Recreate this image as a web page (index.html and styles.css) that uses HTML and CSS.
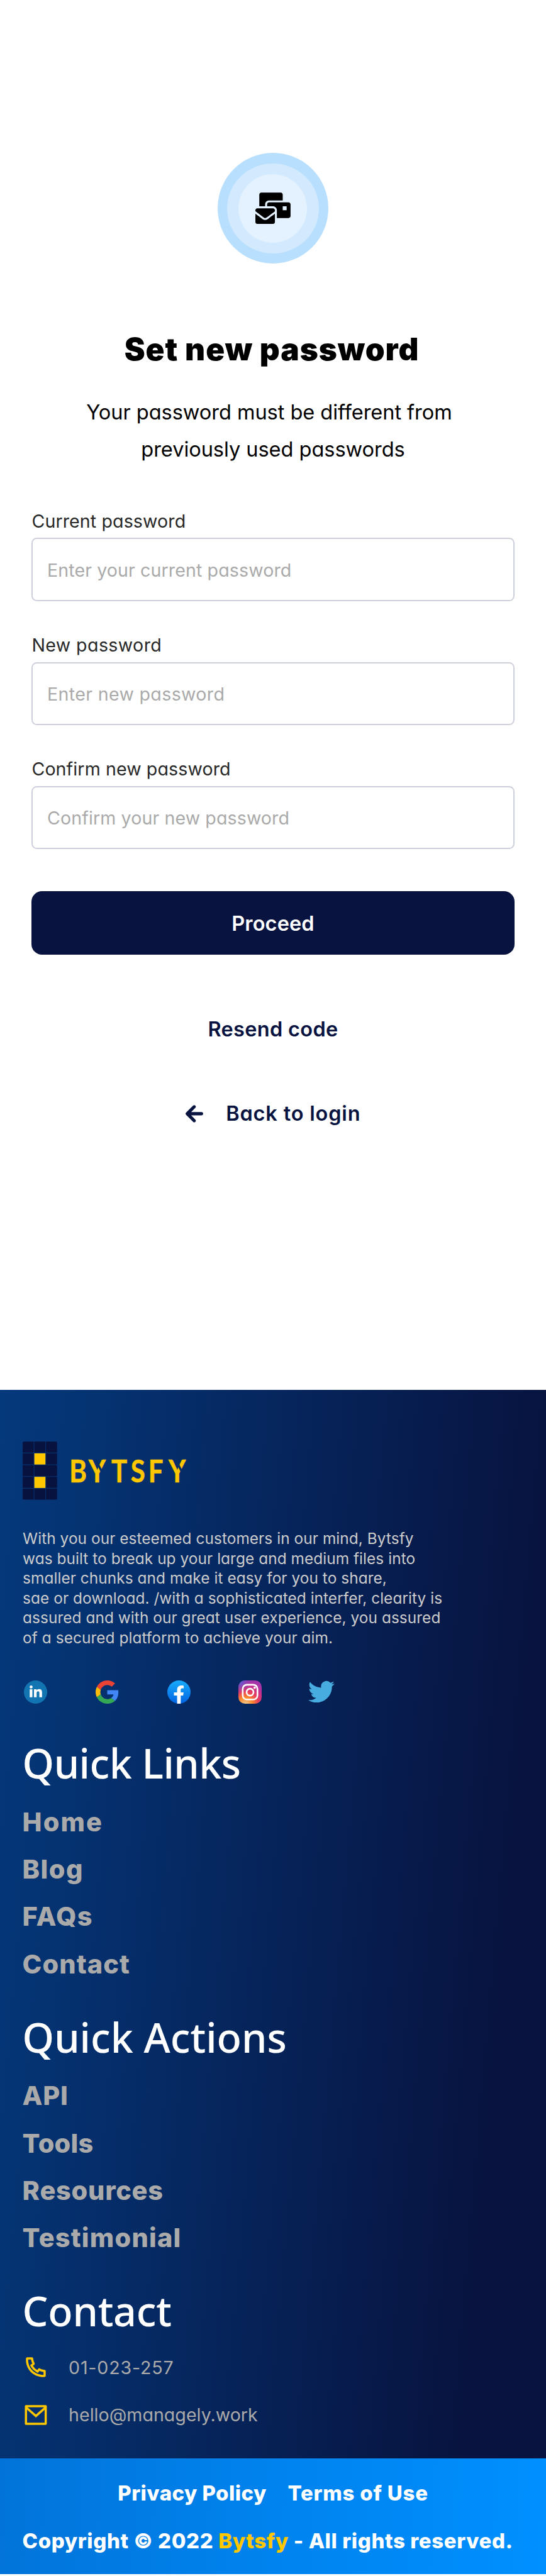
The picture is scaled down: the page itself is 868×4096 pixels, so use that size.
FILE: index.html
```html
<!DOCTYPE html>
<html lang="en">
<head>
<meta charset="utf-8">
<title>Set new password - Bytsfy</title>
<link rel="stylesheet" href="styles.css">
</head>
<body>
<div class="page">
  <main class="main">
    <div class="badge"><div class="badge-mid"><div class="badge-core">
      <svg class="badge-icon" viewBox="0 0 576 512"><path d="M160 448c-25.6 0-51.2-22.4-64-32-64-44.8-83.2-60.8-96-70.4V480c0 17.67 14.33 32 32 32h256c17.67 0 32-14.33 32-32V345.6c-12.8 9.6-32 25.6-96 70.4-12.8 9.6-38.4 32-64 32zm128-192H32c-17.67 0-32 14.33-32 32v16c25.6 19.2 22.4 19.2 115.2 86.4 9.6 6.4 28.8 25.6 44.8 25.6s35.2-19.2 44.8-22.4c92.8-67.2 89.6-67.2 115.2-86.4V288c0-17.67-14.33-32-32-32zm256-96H224c-17.67 0-32 14.33-32 32v32h96c33.21 0 60.59 25.42 63.71 57.82l.29-.22V416h192c17.67 0 32-14.33 32-32V192c0-17.67-14.33-32-32-32zm-32 128h-64v-64h64v64zm-352-96c0-35.29 28.71-64 64-64h224V32c0-17.67-14.33-32-32-32H96C78.33 0 64 14.33 64 32v192h96v-32z"/></svg>
    </div></div></div>
    <h1 class="title">Set new password</h1>
    <p class="subtitle"><span class="subtitle-first">Your password must be different from</span><br>previously used passwords</p>
    <form class="form">
      <div class="field current">
        <label class="label" for="current">Current password</label>
        <input class="input" id="current" type="text" placeholder="Enter your current password">
      </div>
      <div class="field new">
        <label class="label" for="new">New password</label>
        <input class="input" id="new" type="text" placeholder="Enter new password">
      </div>
      <div class="field confirm">
        <label class="label" for="confirm">Confirm new password</label>
        <input class="input" id="confirm" type="text" placeholder="Confirm your new password">
      </div>
      <button class="proceed" type="button">Proceed</button>
    </form>
    <a class="resend">Resend code</a>
    <a class="back">
      <svg class="back-icon" viewBox="0 0 40 40"><path d="M19.6 4 3.8 19.8l15.8 15.8M4.500 19.800h31.800" fill="none" stroke="#08133f" stroke-width="7.200" stroke-linecap="round" stroke-linejoin="round"/></svg>
      <span>Back to login</span>
    </a>
  </main>

  <footer class="footer">
    <svg class="logo" viewBox="0 0 380 133">
      <g fill="#08123f">
        <path d="M3 .2h22.2v25.2H0V3.2a3 3 0 0 1 3-3z"/>
        <rect x="26.6" y=".2" width="25.2" height="25.2"/>
        <path d="M53.1.2h22.2a3 3 0 0 1 3 3v22.2H53.1z"/>
        <rect x="0" y="27" width="25.2" height="25.2"/>
        <rect x="53.1" y="27" width="25.2" height="25.2"/>
        <rect x="0" y="53.8" width="25.2" height="25.2"/>
        <path d="M26.6 53.8h48.7a3 3 0 0 1 3 3V76a3 3 0 0 1-3 3H26.600z"/>
        <rect x="0" y="80.4" width="25.2" height="25.2"/>
        <rect x="53.1" y="80.4" width="25.2" height="25.2"/>
        <path d="M0 107.2h25.2v25.2H3a3 3 0 0 1-3-3z"/>
        <rect x="26.6" y="107.2" width="25.2" height="25.2"/>
        <path d="M53.1 107.2h25.2v22.2a3 3 0 0 1-3 3H53.1z"/>
      </g>
      <g fill="#ffc700">
        <rect x="26.6" y="27" width="25.2" height="25.4"/>
        <rect x="26.6" y="80.4" width="25.2" height="25.4"/>
      </g>
      <text class="logo-text" transform="scale(.86 1)" x="123.7 174.3 234.7 285.9 332.2 385.9" y="93.700">BYTSFY</text>
      <path d="M164.500 38l15 30M346.500 38l15 30" stroke="#062f69" stroke-width="5" fill="none"/>
    </svg>
    <p class="about">With you our esteemed customers in our mind, Bytsfy<br>was built to break up your large and medium files into<br>smaller chunks and make it easy for you to share,<br>sae or download. /with a sophisticated interfer, clearity is<br>assured and with our great user experience, you assured<br>of a secured platform to achieve your aim.</p>
    <div class="social">
      <svg class="social-icon" viewBox="0 0 53 53"><circle cx="26.5" cy="26.5" r="26.5" fill="#1275b1"/><g fill="#fff"><circle cx="16.4" cy="14.9" r="3.4"/><path d="M13.2 20.2h6.1v18h-6.1zM22.9 20.2h5.9v2.5c1-1.8 3-3 5.8-3 5 0 6.7 3 6.7 8v10.5h-6.1v-9.3c0-2.700-.6-4.100-2.800-4.100-2.400 0-3.400 1.600-3.400 4.200v9.200h-6.100z"/></g></svg>
      <svg class="social-icon" viewBox="0 0 48 48"><path fill="#ea4335" d="M24 9.500c3.540 0 6.710 1.220 9.210 3.600l6.850-6.850C35.900 2.380 30.470 0 24 0 14.620 0 6.510 5.380 2.560 13.220l7.980 6.190C12.430 13.720 17.740 9.500 24 9.500z"/><path fill="#4285f4" d="M46.980 24.550c0-1.570-.15-3.090-.38-4.550H24v9.020h12.940c-.58 2.960-2.260 5.480-4.780 7.180l7.730 6c4.510-4.180 7.090-10.360 7.090-17.650z"/><path fill="#fbbc05" d="M10.530 28.590c-.48-1.450-.76-2.990-.76-4.590s.27-3.140.76-4.590l-7.980-6.190C.92 16.460 0 20.120 0 24c0 3.880.92 7.540 2.560 10.780l7.970-6.190z"/><path fill="#34a853" d="M24 48c6.480 0 11.930-2.130 15.890-5.810l-7.730-6c-2.150 1.450-4.920 2.300-8.160 2.300-6.260 0-11.570-4.220-13.470-9.910l-7.980 6.190C6.510 42.620 14.620 48 24 48z"/></svg>
      <svg class="social-icon" viewBox="0 0 53 53"><defs><linearGradient id="fb" x1="0" y1="0" x2="0" y2="1"><stop offset="0" stop-color="#18acfe"/><stop offset="1" stop-color="#0163e0"/></linearGradient></defs><circle cx="26.500" cy="26.500" r="26.500" fill="url(#fb)"/><path fill="#fff" d="M22.300 52.700V34.300h-7.200v-7h7.200V22c0-7 3.700-10.400 10.200-10.400 2 0 3.500.2 4.800.4v6h-3.500c-2.800 0-3.300 1.500-3.300 3.800v5.500h6.600l-1.100 7h-5.500v18.400a26 26 0 0 1-8.200 0z"/></svg>
      <svg class="social-icon" viewBox="0 0 53 53"><defs><radialGradient id="ig" cx=".3" cy="1.05" r="1.05"><stop offset="0" stop-color="#e6d79a"/><stop offset=".12" stop-color="#f3b670"/><stop offset=".3" stop-color="#ff8a2c"/><stop offset=".55" stop-color="#e63e5c"/><stop offset=".8" stop-color="#c52f92"/><stop offset="1" stop-color="#a334ac"/></radialGradient><radialGradient id="igb" cx="0" cy="0" r=".6"><stop offset="0" stop-color="#3f6fe0"/><stop offset="1" stop-color="#7a3fc4" stop-opacity="0"/></radialGradient></defs><rect width="53" height="53" rx="15" fill="url(#ig)"/><rect width="53" height="53" rx="15" fill="url(#igb)"/><g fill="none" stroke="#fff" stroke-width="3.700"><rect x="9.800" y="9.800" width="33.600" height="33.600" rx="9.500"/><circle cx="26.500" cy="26.700" r="7.900"/></g><circle cx="37" cy="16.500" r="2.700" fill="#fff"/></svg>
      <svg class="social-icon twitter" viewBox="0 0 24 24"><path fill="#47acdf" d="M23.953 4.570a10 10 0 01-2.825.775 4.958 4.958 0 002.163-2.723c-.951.555-2.005.959-3.127 1.184a4.920 4.920 0 00-8.384 4.482C7.690 8.095 4.067 6.130 1.640 3.162a4.822 4.822 0 00-.666 2.475c0 1.710.870 3.213 2.188 4.096a4.904 4.904 0 01-2.228-.616v.060a4.923 4.923 0 003.946 4.827 4.996 4.996 0 01-2.212.085 4.936 4.936 0 004.604 3.417 9.867 9.867 0 01-6.102 2.105c-.390 0-.779-.023-1.170-.067a13.995 13.995 0 007.557 2.209c9.053 0 13.998-7.496 13.998-13.985 0-.210 0-.420-.015-.630A9.935 9.935 0 0024 4.590z"/></svg>
    </div>

    <h2 class="heading links-heading">Quick Links</h2>
    <nav class="links">
      <a class="link home">Home</a>
      <a class="link blog">Blog</a>
      <a class="link faqs">FAQs</a>
      <a class="link contact">Contact</a>
    </nav>
    <h2 class="heading actions-heading">Quick Actions</h2>
    <nav class="links">
      <a class="link api">API</a>
      <a class="link tools">Tools</a>
      <a class="link resources">Resources</a>
      <a class="link testimonial">Testimonial</a>
    </nav>
    <h2 class="heading contact-heading">Contact</h2>
    <div class="contacts">
      <div class="contact-row phone">
        <svg class="contact-icon" viewBox="0 0 24 24"><path d="M9.366 10.682a10.556 10.556 0 0 0 3.952 3.952l.884-1.238a1 1 0 0 1 1.294-.296 11.422 11.422 0 0 0 4.583 1.364 1 1 0 0 1 .921.997v4.462a1 1 0 0 1-.898.995c-.53.055-1.064.082-1.602.082C9.940 21 3 14.060 3 5.500c0-.538.027-1.072.082-1.602A1 1 0 0 1 4.077 3h4.462a1 1 0 0 1 .997.921A11.422 11.422 0 0 0 10.900 8.504a1 1 0 0 1-.296 1.294l-1.238.884zm-2.522-.657l1.900-1.357A13.410 13.410 0 0 1 7.647 5H5.010c-.006.166-.009.333-.009.500C5 12.956 11.044 19 18.500 19c.167 0 .334-.003.500-.010v-2.637a13.410 13.410 0 0 1-3.668-1.097l-1.357 1.900a12.442 12.442 0 0 1-1.588-.750l-.058-.033a12.556 12.556 0 0 1-4.702-4.702l-.033-.058a12.442 12.442 0 0 1-.750-1.588z"/></svg>
        <span>01-023-257</span>
      </div>
      <div class="contact-row email">
        <svg class="contact-icon" viewBox="0 0 24 24"><path d="M3 3h18a1 1 0 0 1 1 1v16a1 1 0 0 1-1 1H3a1 1 0 0 1-1-1V4a1 1 0 0 1 1-1zm17 4.238l-7.928 7.100L4 7.216V19h16V7.238zM4.511 5l7.550 6.662L19.502 5H4.511z"/></svg>
        <span>hello@managely.work</span>
      </div>
    </div>
  </footer>

  <div class="bottom">
    <div class="legal"><a class="privacy">Privacy Policy</a><a class="terms">Terms of Use</a></div>
    <p class="copyright">Copyright © 2022 <span class="brand">Bytsfy</span> - All rights reserved.</p>
  </div>
</div>
</body>
</html>
```
FILE: styles.css
```css
* { box-sizing: border-box; }
body {
  margin: 0;
  background: #fff;
  font-family: Inter, "Open Sans", sans-serif;
  font-feature-settings: "cv11";
}
h1, h2, p { margin: 0; }
svg { display: block; flex: none; }
.page { display: flex; flex-direction: column; width: 868px; height: 4096px; }

.main {
  flex: none;
  display: flex;
  flex-direction: column;
  align-items: center;
  height: 2209.8px;
  padding: 243.2px 50.4px 0;
}
.badge, .badge-mid, .badge-core { display: flex; align-items: center; justify-content: center; border-radius: 50%; flex: none; }
.badge { width: 176.2px; height: 176.2px; background: #b9dffe; }
.badge-mid { width: 146.8px; height: 142.9px; background: #d2e9fe; }
.badge-core { width: 109px; height: 109px; background: #e4f2ff; }
.badge-icon { width: 55.9px; height: 50.3px; }

.title {
  margin-top: 105.5px;
  margin-right: 4px;
  font-size: 49.5px;
  line-height: 60px;
  font-weight: 900;
  letter-spacing: .95px;
  color: #000;
  font-feature-settings: normal;
}
.subtitle { margin-top: 41.4px; font-size: 32.6px; line-height: 58.7px; letter-spacing: -.07px; text-align: center; white-space: nowrap; color: #000; }
.subtitle-first { padding-right: 12px; }

.form { width: 100%; margin-top: 66.9px; }
.field { display: flex; flex-direction: column; margin-bottom: 51.5px; }
.label { font-size: 28.6px; line-height: 36px; color: #282828; letter-spacing: .1px; }
.input {
  width: 100%;
  height: 100.7px;
  margin: 8.9px 0 0;
  padding: 1px 22.6px 0;
  border: 2px solid #cdd0db;
  border-radius: 8.4px;
  background: #fff;
  font: 28.6px Inter, sans-serif;
  font-feature-settings: "cv11";
  letter-spacing: .1px;
}
.input::placeholder { color: #aaa; opacity: 1; }
.new .label { letter-spacing: .39px; }
.new .input { letter-spacing: .34px; }
.proceed {
  display: block;
  width: 100%;
  height: 100.6px;
  margin-top: 67px;
  padding: 1px 0 0;
  border: 0;
  border-radius: 16.8px;
  background: #08133f;
  color: #fff;
  font: 600 32.5px Inter, sans-serif;
  letter-spacing: .12px;
}
.resend, .back { font-size: 32.5px; line-height: 40px; font-weight: 600; color: #08133f; }
.resend { margin-top: 99px; letter-spacing: .32px; }
.back { display: flex; align-items: center; gap: 36.700px; margin-top: 94px; letter-spacing: .82px; }
.back-icon { width: 28px; height: 28px; }

.footer {
  flex: none;
  height: 1699px;
  padding: 82.5px 36px 0 35.6px;
  background: linear-gradient(95deg, #04397c 0%, #08133f 87%);
}
.logo { width: 265.6px; height: 93px; }
.logo-text { font: 700 70px Lato, sans-serif; font-feature-settings: normal; fill: #ffc700; stroke: #ffc700; stroke-width: .8; }
.about { margin-top: 46px; padding-left: .5px; font-size: 24.4px; line-height: 31.45px; letter-spacing: .06px; color: #ccc; white-space: nowrap; }
.social { display: flex; align-items: center; gap: 76.7px; height: 37px; margin-top: 51.8px; padding-left: 2.6px; }
.social-icon { width: 37px; height: 37px; }
.twitter { width: 42px; height: 42px; margin-left: -2.9px; }

.heading { font: 500 64.5px/80px "Noto Sans", "Open Sans", sans-serif; font-feature-settings: normal; color: #fff; white-space: nowrap; }
.links-heading { margin-top: 54.3px; letter-spacing: -.5px; }
.actions-heading { margin-top: 37.4px; letter-spacing: 0; }
.contact-heading { margin-top: 37.2px; letter-spacing: -.25px; }
.links { display: flex; flex-direction: column; margin-top: 16.4px; }
.actions-heading + .links { margin-bottom: .5px; }
.link { font-size: 41.5px; line-height: 75.45px; font-weight: 800; color: #aaa; font-feature-settings: normal; letter-spacing: 1.21px; }
.home { letter-spacing: 2.09px; }
.blog, .faqs { letter-spacing: 1.42px; }
.contact { letter-spacing: 1.05px; }
.api, .resources { letter-spacing: .75px; }
.tools { letter-spacing: .2px; }

.contacts { margin-top: 12.2px; }
.contact-row { display: flex; align-items: center; gap: 31.5px; height: 75.5px; font-size: 28.6px; color: #aaa; }
.contact-icon { width: 41.93px; height: 41.93px; fill: #ffc700; }
.phone { letter-spacing: .83px; }
.email { letter-spacing: .02px; }

.bottom {
  flex: none;
  height: 184.5px;
  padding-top: 18.4px;
  background: linear-gradient(93deg, #0274d9 0%, #0083ee 50%, #0090ff 100%);
  color: #fff;
  font-size: 33px;
  line-height: 75.5px;
  font-weight: 800;
  font-feature-settings: normal;
}
.legal { display: flex; justify-content: center; gap: 33.5px; }
.privacy { letter-spacing: .43px; }
.terms { letter-spacing: .77px; }
.copyright { padding-left: 35.5px; letter-spacing: .59px; white-space: nowrap; }
.brand { color: #ffc700; }
```
